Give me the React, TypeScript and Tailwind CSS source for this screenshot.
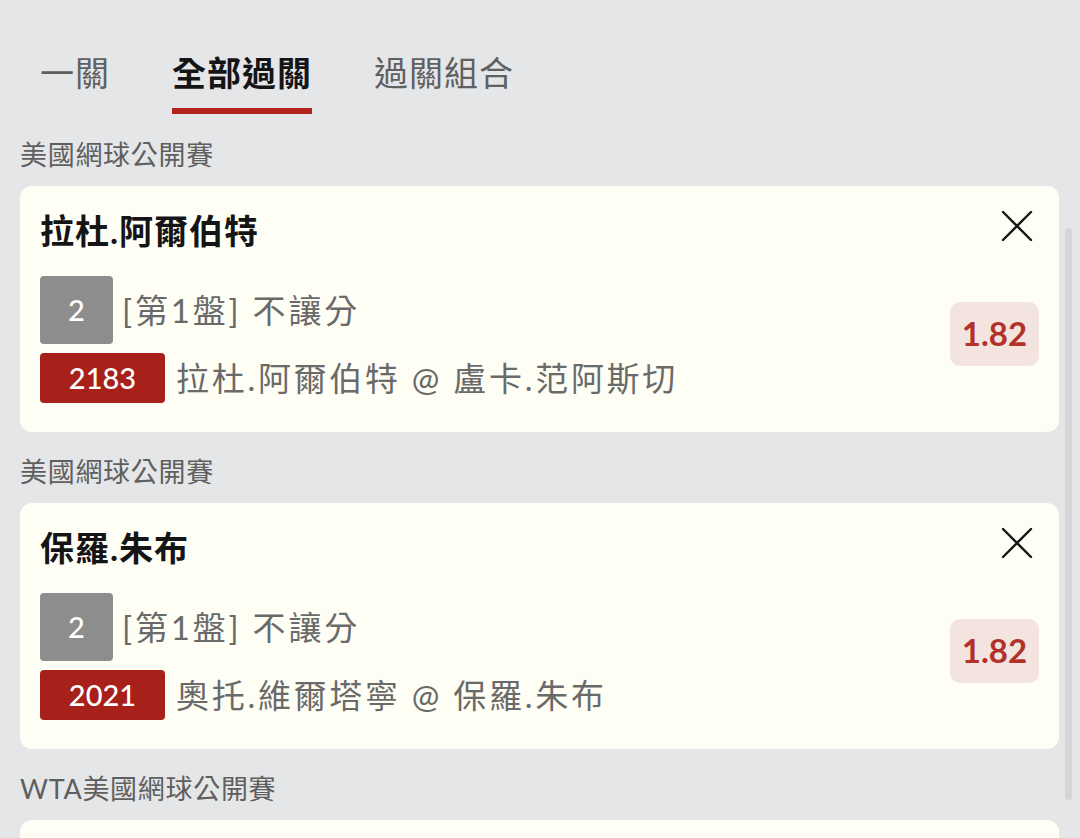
import React from 'react';

type Bet = {
  league: string;
  title: string;
  no: string;
  market: string;
  code: string;
  match: string;
  odds: string;
};

const bets: Bet[] = [
  {
    league: '美國網球公開賽',
    title: '拉杜.阿爾伯特',
    no: '2',
    market: '[第1盤] 不讓分',
    code: '2183',
    match: '拉杜.阿爾伯特 @ 盧卡.范阿斯切',
    odds: '1.82',
  },
  {
    league: '美國網球公開賽',
    title: '保羅.朱布',
    no: '2',
    market: '[第1盤] 不讓分',
    code: '2021',
    match: '奧托.維爾塔寧 @ 保羅.朱布',
    odds: '1.82',
  },
  {
    league: 'WTA美國網球公開賽',
    title: '艾瑪.納瓦羅',
    no: '2',
    market: '[第1盤] 不讓分',
    code: '2207',
    match: '艾瑪.納瓦羅 @ 瑪蒂娜.特雷維桑',
    odds: '1.75',
  },
];

const CloseIcon = () => (
  <svg width="32" height="32" viewBox="0 0 32 32" fill="none" stroke="#161616" strokeWidth="2.4" strokeLinecap="round">
    <path d="M2 2L30 30M30 2L2 30" />
  </svg>
);

const BetCard = ({ bet }: { bet: Bet }) => (
  <div className="ml-[20px] mr-[21px] rounded-[12px] bg-[#fefef5] pl-[20px] pr-[20px] pt-[23px] pb-[29px]">
    <div className="flex items-center justify-between">
      <h3 className="text-[34px] leading-[44px] font-bold tracking-[1px] text-[#151515]">{bet.title}</h3>
      <div className="mb-[10px] mr-[6px]">
        <CloseIcon />
      </div>
    </div>
    <div className="mt-[23px] flex items-center justify-between">
      <div className="flex flex-col gap-[9px]">
        <div className="flex items-center gap-[9px]">
          <div className="flex h-[68px] w-[73px] items-center justify-center rounded-[4px] bg-[#8d8d8d] text-[29px] font-medium text-white">
            {bet.no}
          </div>
          <span className="text-[33px] leading-[40px] tracking-[2.8px] text-[#6a6a6a]">{bet.market}</span>
        </div>
        <div className="flex items-center gap-[11px]">
          <div className="flex h-[50px] w-[125px] items-center justify-center rounded-[4px] bg-[#a8201a] text-[29px] font-medium text-white">
            {bet.code}
          </div>
          <span className="text-[33px] leading-[40px] tracking-[2.7px] text-[#6a6a6a]">{bet.match}</span>
        </div>
      </div>
      <div className="mb-[11px] flex h-[64px] w-[89px] items-center justify-center rounded-[10px] bg-[#f4e4df] text-[33px] font-bold text-[#b0322a]">
        {bet.odds}
      </div>
    </div>
  </div>
);

export default function App() {
  return (
    <div
      className="relative h-[838px] overflow-hidden bg-[#e5e6e8]"
      style={{ fontFamily: 'Lato, "Noto Sans CJK TC", "Noto Sans", sans-serif' }}
    >
      <div className="flex gap-[62px] pl-[40px] pt-[51px]">
        <div className="flex flex-col">
          <span className="text-[34px] leading-[44px] tracking-[1px] text-[#606060]">一關</span>
        </div>
        <div className="flex flex-col">
          <span className="text-[34px] leading-[44px] font-bold tracking-[1px] text-[#151515]">全部過關</span>
          <div className="mt-[13px] h-[6px] w-full bg-[#b2221c]" />
        </div>
        <div className="flex flex-col">
          <span className="text-[34px] leading-[44px] tracking-[1px] text-[#606060]">過關組合</span>
        </div>
      </div>

      <div className="mt-[23px] flex flex-col">
        {bets.map((bet, i) => (
          <div key={i} className="flex flex-col">
            <div className={`${i === 0 ? '' : 'mt-[22px]'} pl-[20px] text-[27px] leading-[36px] tracking-[0.7px] text-[#5f5f5f]`}>
              {bet.league}
            </div>
            <div className="mt-[13px]">
              <BetCard bet={bet} />
            </div>
          </div>
        ))}
      </div>

      {/* scroll indicator */}
      <div className="absolute right-[8px] top-[228px] h-[572px] w-[7px] rounded-full bg-[#d4d5d7]" />
    </div>
  );
}
